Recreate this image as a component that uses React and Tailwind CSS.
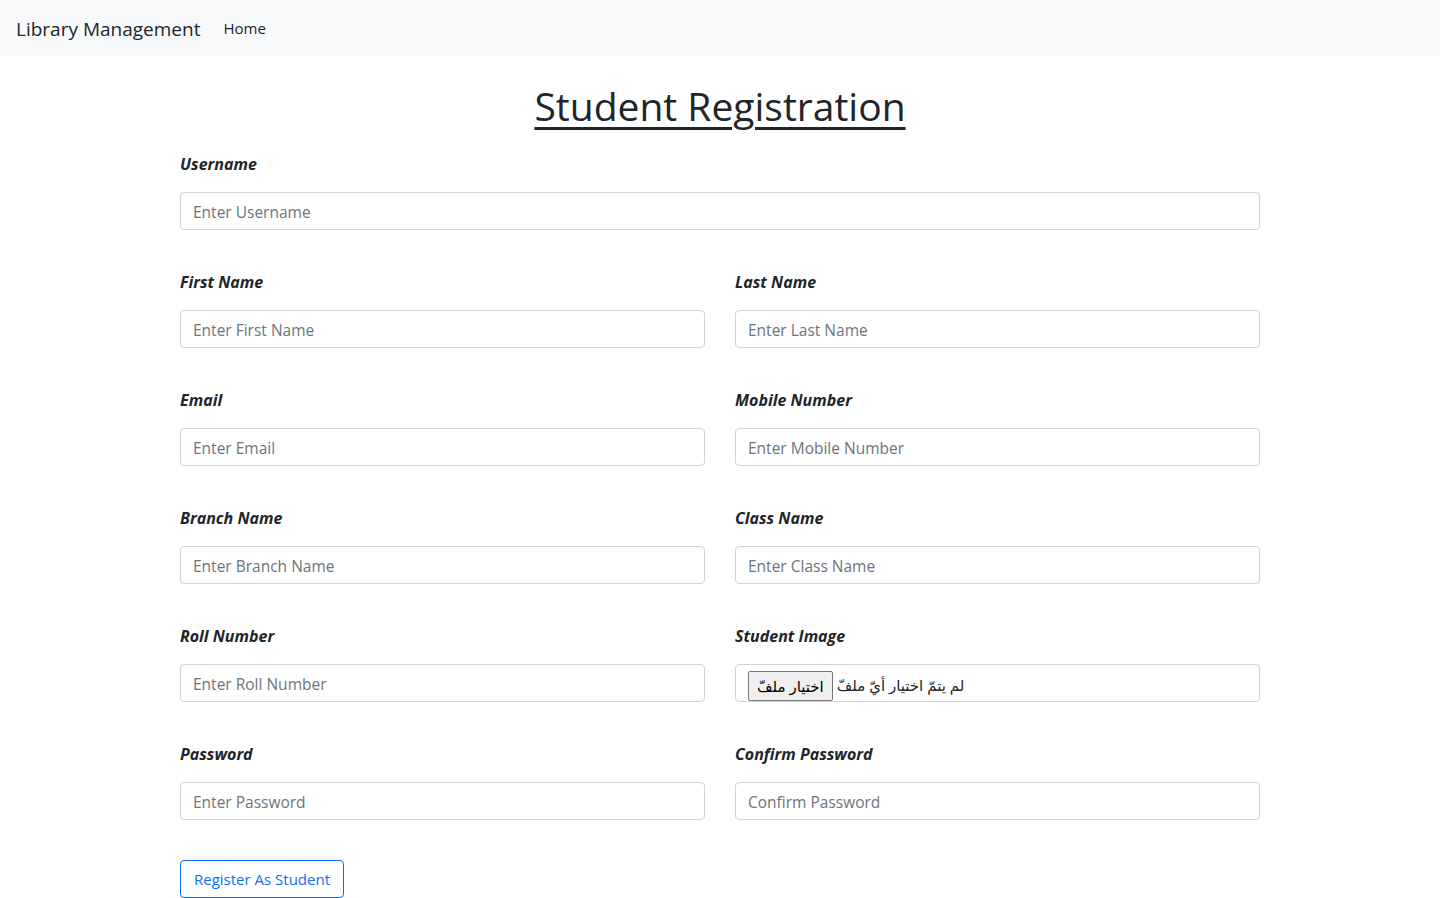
import React from 'react'

const font = { fontFamily: '"Open Sans", "DejaVu Sans", sans-serif' }

const Field = ({ label, placeholder, file }) => (
  <div className="flex flex-col">
    <label className="text-[16px] leading-6 font-bold italic text-[#212529] mb-4">{label}</label>
    {file ? (
      <div className="h-[38px] border border-[#ced4da] rounded-[4px] bg-white flex items-center pl-3 gap-1">
        <span className="h-[30px] mt-[6px] px-2 flex items-center bg-[#efefef] border border-[#767676] rounded-[2px] text-[15px] text-black">
          اختيار ملفّ
        </span>
        <span className="text-[15px] text-[#212529] mt-1">لم يتمّ اختيار أيّ ملفّ</span>
      </div>
    ) : (
      <input
        placeholder={placeholder}
        className="h-[38px] w-full border border-[#ced4da] rounded-[4px] px-3 pt-px text-[15.5px] text-[#212529] placeholder:text-[#6c757d] outline-none bg-white"
      />
    )}
  </div>
)

export default function App() {
  const rows = [
    [['First Name', 'Enter First Name'], ['Last Name', 'Enter Last Name']],
    [['Email', 'Enter Email'], ['Mobile Number', 'Enter Mobile Number']],
    [['Branch Name', 'Enter Branch Name'], ['Class Name', 'Enter Class Name']],
    [['Roll Number', 'Enter Roll Number'], ['Student Image', null, true]],
    [['Password', 'Enter Password'], ['Confirm Password', 'Confirm Password']],
  ]

  return (
    <div className="min-h-[898px] bg-white" style={font}>
      <nav className="h-14 bg-[#f8f9fa] flex items-center px-4">
        <span className="text-[19px] text-[#212529] mr-[23px] pt-[3px]">Library Management</span>
        <span className="text-[15px] text-[#212529]">Home</span>
      </nav>

      <div className="w-[1080px] mx-auto pb-10">
        <h1 className="mt-[26px] text-center text-[39px] leading-[48px] font-medium text-[#212529] underline decoration-[3px] underline-offset-[6px]">
          Student Registration
        </h1>

        <div className="mt-[22px] flex flex-col gap-10">
          <Field label="Username" placeholder="Enter Username" />
          {rows.map((row, i) => (
            <div key={i} className="grid grid-cols-2 gap-[30px]">
              {row.map(([label, ph, file]) => (
                <Field key={label} label={label} placeholder={ph} file={file} />
              ))}
            </div>
          ))}
          <div>
            <button className="h-[38px] px-[13px] border border-[#0d6efd] rounded-[4px] text-[15px] text-[#0d6efd] bg-white">
              Register As Student
            </button>
          </div>
        </div>
      </div>
    </div>
  )
}
